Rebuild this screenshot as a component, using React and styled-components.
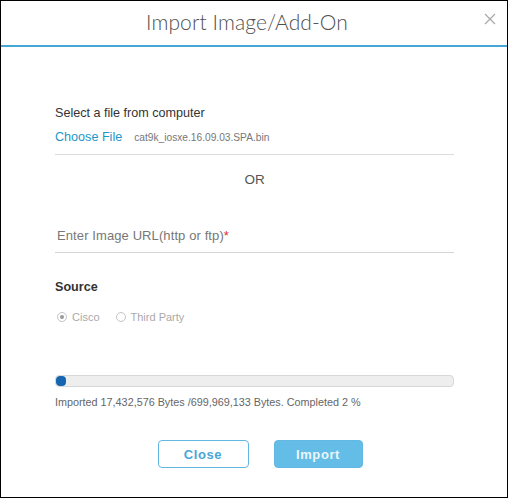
import styled, { createGlobalStyle } from "styled-components";

const Global = createGlobalStyle`
    html, body {
        margin: 0;
        padding: 0;
        background: #fff;
    }
    * {
        box-sizing: border-box;
    }
`;

const Dialog = styled.div`
    width: 508px;
    height: 498px;
    border: 1px solid #000;
    background: #fff;
    font-family: "Liberation Sans", Arial, sans-serif;
    display: flex;
    flex-direction: column;
`;

const Header = styled.header`
    position: relative;
    height: 46px;
    border-bottom: 2px solid #45a6d8;
    display: flex;
    align-items: center;
    justify-content: center;
    padding: 0 14px 3px 0;

    h2 {
        margin: 0;
        font-family: "Lato", "Open Sans", sans-serif;
        font-weight: 300;
        font-size: 21px;
        color: #505050;
        letter-spacing: 0.1px;
    }
`;

const CloseX = styled.button`
    position: absolute;
    right: 10px;
    top: 11px;
    width: 14px;
    height: 14px;
    padding: 0;
    border: none;
    background: none;
    cursor: pointer;
`;

const Body = styled.main`
    padding: 58px 53px 0 54px;
    display: flex;
    flex-direction: column;
`;

const Label = styled.div`
    font-size: 12.6px;
    line-height: 16px;
    color: #333;
    font-weight: ${(props) => (props.$bold ? 700 : 400)};
`;

const FileRow = styled.div`
    display: flex;
    align-items: baseline;
    gap: 12px;
    margin-top: 8px;
    padding-bottom: 8px;
    border-bottom: 1px solid #dcdcdc;
    line-height: 16px;

    span.link {
        font-size: 12.6px;
        color: #1d97c8;
    }
    span.nome {
        font-size: 10.2px;
        color: #777;
    }
`;

const Ou = styled.div`
    text-align: center;
    font-size: 13.5px;
    color: #555;
    margin-top: 17px;
    line-height: 16px;
`;

const UrlInput = styled.div`
    margin-top: 40px;
    padding: 0 0 8px 2px;
    border-bottom: 1px solid #d4d4d4;
    font-size: 13px;
    line-height: 16px;
    color: #777;
    letter-spacing: 0.1px;

    span {
        color: #e0282e;
    }
`;

const Fonte = styled(Label)`
    margin-top: 26px;
`;

const Radios = styled.div`
    display: flex;
    gap: 16px;
    margin-top: 15px;
    padding-left: 2px;
    font-size: 11px;
    line-height: 14px;
    color: #aaa;
`;

const Radio = styled.label`
    display: flex;
    align-items: center;
    gap: 5px;

    i {
        width: 10px;
        height: 10px;
        border: 1px solid #c4c4c4;
        border-radius: 50%;
        display: flex;
        align-items: center;
        justify-content: center;
    }
    i::after {
        content: "";
        width: 4px;
        height: 4px;
        border-radius: 50%;
        background: ${(props) => (props.$checked ? "#999" : "transparent")};
    }
`;

const Barra = styled.div`
    margin-top: 51px;
    height: 12px;
    border: 1px solid #d8d8d8;
    border-radius: 4px;
    background: #eeeeee;
    overflow: hidden;
`;

const Preenchido = styled.div`
    height: 100%;
    background: #1566b0;
    border-radius: 4px;
`;

const Status = styled.div`
    margin-top: 8px;
    font-size: 10.8px;
    line-height: 14px;
    color: #666;
`;

const Rodape = styled.div`
    display: flex;
    justify-content: center;
    gap: 25px;
    margin-top: 31px;
    padding-left: 11px;
`;

const Botao = styled.button`
    width: ${(props) => (props.$primary ? "89px" : "91px")};
    height: 28px;
    border-radius: 4px;
    font-family: "Liberation Sans", Arial, sans-serif;
    font-size: 13px;
    font-weight: 700;
    letter-spacing: 0.6px;
    border: 1px solid #62b8e2;
    background: ${(props) => (props.$primary ? "#64bde6" : "#fff")};
    color: ${(props) => (props.$primary ? "#eaf6fc" : "#4aa7d6")};
    cursor: pointer;
`;

const App = () => {
    const importado = 17432576;
    const total = 699969133;
    const pct = Math.max((importado / total) * 100, 1.9);

    return (
        <>
            <Global />
            <Dialog>
                <Header>
                    <h2>Import Image/Add-On</h2>
                    <CloseX aria-label="close">
                        <svg width="14" height="14" viewBox="0 0 14 14">
                            <path d="M2 2 L12 12 M12 2 L2 12" stroke="#a8a8a8" strokeWidth="1.2" />
                        </svg>
                    </CloseX>
                </Header>
                <Body>
                    <Label>Select a file from computer</Label>
                    <FileRow>
                        <span className="link">Choose File</span>
                        <span className="nome">cat9k_iosxe.16.09.03.SPA.bin</span>
                    </FileRow>
                    <Ou>OR</Ou>
                    <UrlInput>
                        Enter Image URL(http or ftp)<span>*</span>
                    </UrlInput>
                    <Fonte $bold>Source</Fonte>
                    <Radios>
                        <Radio $checked>
                            <i />
                            Cisco
                        </Radio>
                        <Radio>
                            <i />
                            Third Party
                        </Radio>
                    </Radios>
                    <Barra>
                        <Preenchido style={{ width: `${pct}%` }} />
                    </Barra>
                    <Status>Imported 17,432,576 Bytes /699,969,133 Bytes. Completed 2 %</Status>
                    <Rodape>
                        <Botao>Close</Botao>
                        <Botao $primary>Import</Botao>
                    </Rodape>
                </Body>
            </Dialog>
        </>
    );
};

export default App;
